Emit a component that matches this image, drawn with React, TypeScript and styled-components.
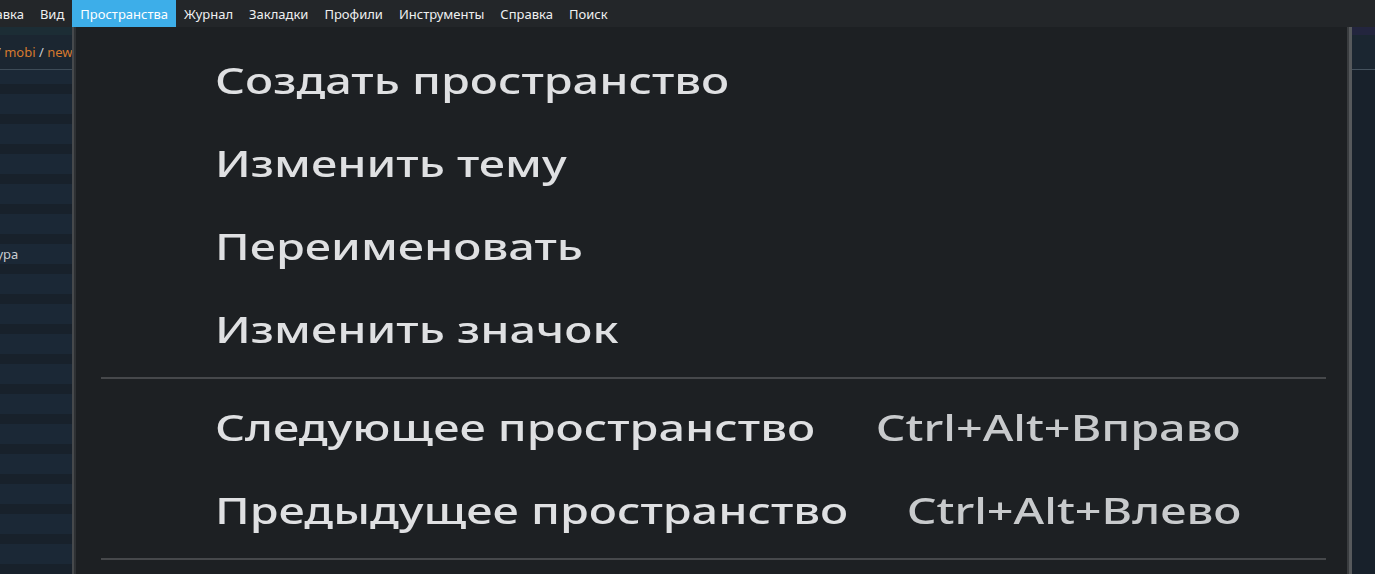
import styled, { createGlobalStyle } from "styled-components"

const GlobalStyle = createGlobalStyle`
  html, body {
    margin: 0;
    padding: 0;
    background: #232629;
    overflow: hidden;
  }
  * {
    box-sizing: border-box;
  }
`

const Window = styled.div`
  width: 1375px;
  height: 574px;
  display: flex;
  flex-direction: column;
  overflow: hidden;
  font-family: "Noto Sans", "Open Sans", sans-serif;
`

const MenuBar = styled.div`
  height: 27px;
  display: flex;
  align-items: stretch;
  background: #232629;
  font-size: 13px;
  color: #eff0f1;
  flex-shrink: 0;
`

const MenuBarItem = styled.div<{ $active?: boolean; $shift?: number }>`
  display: flex;
  align-items: center;
  padding: 0 8px;
  margin-left: ${(p) => (p.$shift ? `${p.$shift}px` : "0")};
  background: ${(p) => (p.$active ? "#3daee9" : "transparent")};
  color: ${(p) => (p.$active ? "#ffffff" : "#eff0f1")};
  white-space: nowrap;
`

const Body = styled.div`
  flex: 1;
  display: flex;
  min-height: 0;
`

const LeftPanel = styled.div`
  width: 72px;
  flex-shrink: 0;
  display: flex;
  flex-direction: column;
  overflow: hidden;
  background: #18212b;
`

const Breadcrumb = styled.div`
  height: 43px;
  flex-shrink: 0;
  display: flex;
  align-items: center;
  padding-top: 7px;
  background: linear-gradient(#1c2d35 0 8px, #1b2631 8px);
  border-bottom: 1px solid #3d4b57;
  font-size: 13px;
  color: #c9cdd1;
  white-space: nowrap;
`

const Crumbs = styled.span`
  margin-left: -4px;
`

const CrumbLink = styled.span`
  color: #d67a2e;
`

const List = styled.div`
  display: flex;
  flex-direction: column;
  padding-top: 14px;
  background: linear-gradient(#1b2836 0 14px, #18212b 14px);
`

const ListRow = styled.div`
  height: 30px;
  flex-shrink: 0;
  display: flex;
  align-items: flex-end;
  border-top: 10px solid #18212b;
  background: #1b2836;
  font-size: 13px;
  color: #c9cdd1;
  white-space: nowrap;
  line-height: 20px;
`

const RowLabel = styled.span`
  margin-left: -45px;
`

const Popup = styled.div`
  flex: 1;
  display: flex;
  flex-direction: column;
  padding-top: 12px;
  background: #1d2023;
  border-left: 2px solid #46494c;
  border-right: 3px solid #56595c;
  box-shadow: inset 2px 0 0 #2e3134, inset -2px 0 0 #3a3d40;
  color: #dfe0e2;
  font-size: 36px;
  font-weight: 500;
  overflow: hidden;
`

const PopupItem = styled.div`
  height: 83px;
  flex-shrink: 0;
  display: flex;
  align-items: center;
  justify-content: space-between;
  padding: 0 108px 0 141px;
  white-space: nowrap;
  filter: blur(0.6px);
`

/* the reference menu is an upscaled, horizontally stretched render */
const Label = styled.span`
  display: inline-block;
  transform: scaleX(1.3);
  transform-origin: left center;
`

const Shortcut = styled.span`
  display: inline-block;
  color: #c8cacc;
  transform: scaleX(1.3);
  transform-origin: right center;
`

const Separator = styled.div`
  height: 2px;
  flex-shrink: 0;
  margin: 6px 23px 7px 27px;
  background: #46484b;
`

const RightPanel = styled.div`
  width: 23px;
  flex-shrink: 0;
  display: flex;
  flex-direction: column;
  background: #18212b;
`

const RightHeader = styled.div`
  height: 43px;
  background: linear-gradient(#23253e 0 8px, #1b2631 8px);
  border-bottom: 1px solid #45525e;
`

const topMenu = ["Вид", "Пространства", "Журнал", "Закладки", "Профили", "Инструменты", "Справка", "Поиск"]

const items: { label: string; shortcut?: string }[][] = [
  [
    { label: "Создать пространство" },
    { label: "Изменить тему" },
    { label: "Переименовать" },
    { label: "Изменить значок" },
  ],
  [
    { label: "Следующее пространство", shortcut: "Ctrl+Alt+Вправо" },
    { label: "Предыдущее пространство", shortcut: "Ctrl+Alt+Влево" },
  ],
]

const rows = Array.from({ length: 17 }, (_, i) => (i === 5 ? "Структура" : ""))

export default function App() {
  return (
    <>
      <GlobalStyle />
      <Window>
        <MenuBar>
          <MenuBarItem $shift={-30}>Правка</MenuBarItem>
          {topMenu.map((m) => (
            <MenuBarItem key={m} $active={m === "Пространства"}>
              {m}
            </MenuBarItem>
          ))}
        </MenuBar>
        <Body>
          <LeftPanel>
            <Breadcrumb>
              <Crumbs>
                / <CrumbLink>mobi</CrumbLink> / <CrumbLink>newsletter</CrumbLink>
              </Crumbs>
            </Breadcrumb>
            <List>
              {rows.map((r, i) => (
                <ListRow key={i}>{r && <RowLabel>{r}</RowLabel>}</ListRow>
              ))}
            </List>
          </LeftPanel>
          <Popup>
            {items.map((group, gi) => (
              <div key={gi} style={{ display: "contents" }}>
                {group.map((it) => (
                  <PopupItem key={it.label}>
                    <Label>{it.label}</Label>
                    {it.shortcut && <Shortcut>{it.shortcut}</Shortcut>}
                  </PopupItem>
                ))}
                <Separator />
              </div>
            ))}
          </Popup>
          <RightPanel>
            <RightHeader />
          </RightPanel>
        </Body>
      </Window>
    </>
  )
}
